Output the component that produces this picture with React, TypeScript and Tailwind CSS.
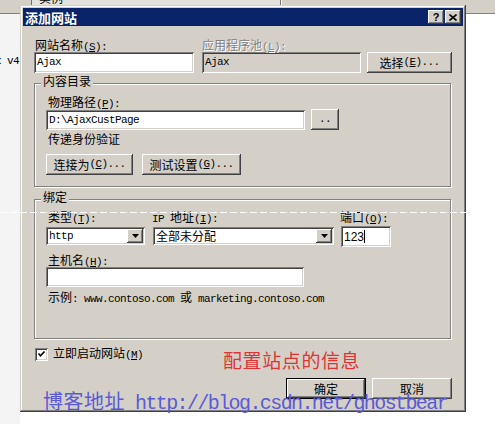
import React from "react";

const RAISED =
  "bg-[#d4d0c8] shadow-[inset_-1px_-1px_#404040,inset_1px_1px_#ffffff,inset_-2px_-2px_#808080,inset_2px_2px_#d4d0c8]";
const SUNKEN =
  "shadow-[inset_1px_1px_#808080,inset_-1px_-1px_#ffffff,inset_2px_2px_#404040,inset_-2px_-2px_#d4d0c8]";
const ETCHED = "border border-[#808080] shadow-[inset_1px_1px_#ffffff,1px_1px_#ffffff]";

function M({ children }: { children: React.ReactNode }) {
  return (
    <span className="font-['Liberation_Mono',monospace] text-[11px] tracking-[-0.6px]">{children}</span>
  );
}

function Lbl({ cn, k, dis, pre }: { cn: string; k?: string; dis?: boolean; pre?: string }) {
  return (
    <div
      className={
        dis
          ? "h-[14px] leading-[14px] text-[12px] whitespace-nowrap text-[#808080] [text-shadow:1px_1px_0_#ffffff]"
          : "h-[14px] leading-[14px] text-[12px] whitespace-nowrap text-black"
      }
    >
      {pre && <M>{pre} </M>}
      {cn}
      {k && (
        <M>
          (<span className="underline">{k}</span>):
        </M>
      )}
    </div>
  );
}

function Input({
  w,
  h,
  children,
  dis,
}: {
  w: string;
  h: string;
  children?: React.ReactNode;
  dis?: boolean;
}) {
  return (
    <div
      className={`${w} ${h} ${dis ? "bg-[#d4d0c8]" : "bg-white"} ${SUNKEN} flex items-center pl-[3px] overflow-hidden whitespace-nowrap`}
    >
      {children}
    </div>
  );
}

function Btn({ w, children, def }: { w: string; children: React.ReactNode; def?: boolean }) {
  return (
    <div
      className={`${w} h-[21px] ${RAISED} ${def ? "border border-black" : ""} flex items-center justify-center text-[12px] leading-none whitespace-nowrap`}
    >
      {children}
    </div>
  );
}

function Arrow() {
  return (
    <div className={`w-[16px] ${RAISED} flex items-center justify-center`}>
      <svg width="7" height="4" viewBox="0 0 7 4">
        <polygon points="0,0 7,0 3.5,4" fill="#000" />
      </svg>
    </div>
  );
}

function Select({ w, children }: { w: string; children: React.ReactNode }) {
  return (
    <div className={`${w} h-[18px] bg-white ${SUNKEN} flex p-[2px]`}>
      <div className="flex-1 flex items-center pl-[1px] overflow-hidden whitespace-nowrap">{children}</div>
      <Arrow />
    </div>
  );
}

function TBtn({ children }: { children: React.ReactNode }) {
  return <div className={`w-[16px] h-[14px] ${RAISED} flex items-center justify-center`}>{children}</div>;
}

export default function App() {
  return (
    <div className="relative w-[495px] h-[424px] overflow-hidden bg-white font-['Noto_Sans_CJK_SC',sans-serif]">
      {/* background window remnants */}
      <div className="flex h-[14px] border-b border-[#808080]">
        <div className="w-[32px] bg-[#d4d0c8] border-r border-[#707070]" />
        <div className="w-[249px] bg-[#e4e2dc] overflow-hidden border-r border-[#707070]">
          <div className="ml-[7px] -mt-[9px] text-[12px] leading-[14px] text-black">实例</div>
        </div>
        <div className="flex-1 bg-[#d4d0c8] border-l border-white" />
      </div>
      <div className="flex">
        <div className="w-[20px] h-[410px] bg-[#f4f4f4] overflow-hidden">
          <div className="mt-[40px] flex justify-end pr-[1px] whitespace-nowrap">
            <span className="font-['Liberation_Mono',monospace] text-[11px] tracking-[-0.6px] leading-[14px] text-black">
              Ajax v4
            </span>
          </div>
        </div>
      </div>

      {/* dialog window */}
      <div className="absolute left-[20px] top-[5px] w-[446px] h-[407px] bg-[#d4d0c8] p-[3px] shadow-[inset_-1px_-1px_#404040,inset_1px_1px_#d4d0c8,inset_-2px_-2px_#808080,inset_2px_2px_#ffffff]">
        <div className="h-[18px] bg-[#0a246a] flex items-center pl-[2px] pr-[2px]">
          <span className="text-white font-bold text-[13px] leading-none">添加网站</span>
          <div className="ml-auto flex gap-[1px]">
            <TBtn>
              <span className="font-['Liberation_Sans',sans-serif] font-bold text-[11px] leading-none text-black">?</span>
            </TBtn>
            <TBtn>
              <svg width="8" height="7" viewBox="0 0 8 7">
                <path d="M0.5 0.5 L7.5 6.5 M7.5 0.5 L0.5 6.5" stroke="#000" strokeWidth="1.6" />
              </svg>
            </TBtn>
          </div>
        </div>

        <div className="ml-[11px] w-[418px] text-[12px] text-black">
          {/* row 1 */}
          <div className="mt-[12px] flex items-end">
            <div className="w-[160px]">
              <div className="ml-[1px]">
                <Lbl cn="网站名称" k="S" />
              </div>
              <Input w="w-[160px]" h="h-[21px]">
                <M>Ajax</M>
              </Input>
            </div>
            <div className="ml-[8px] w-[159px]">
              <Lbl cn="应用程序池" k="L" dis />
              <Input w="w-[159px]" h="h-[21px]" dis>
                <M>Ajax</M>
              </Input>
            </div>
            <div className="ml-[6px]">
              <Btn w="w-[85px]">
                选择<M>(<span className="underline">E</span>)...</M>
              </Btn>
            </div>
          </div>

          {/* group 1 */}
          <div className={`relative mt-[10px] w-[417px] h-[104px] ${ETCHED} pl-[11px] pt-[11px]`}>
            <div className="absolute left-[6px] -top-[10px] px-[2px] bg-[#d4d0c8] leading-[14px] text-[12px]">内容目录</div>
            <div className="ml-[2px]">
              <Lbl cn="物理路径" k="P" />
            </div>
            <div className="flex items-end">
              <Input w="w-[259px]" h="h-[20px]">
                <M>D:\AjaxCustPage</M>
              </Input>
              <div className="ml-[6px]">
                <Btn w="w-[28px]">
                  <M>..</M>
                </Btn>
              </div>
            </div>
            <div className="mt-[2px] ml-[2px]">
              <Lbl cn="传递身份验证" />
            </div>
            <div className="mt-[8px] flex gap-[9px]">
              <Btn w="w-[87px]">
                连接为<M>(<span className="underline">C</span>)...</M>
              </Btn>
              <Btn w="w-[99px]">
                测试设置<M>(<span className="underline">G</span>)...</M>
              </Btn>
            </div>
          </div>

          {/* group 2 */}
          <div className={`relative mt-[12px] w-[417px] h-[140px] ${ETCHED} pl-[11px] pt-[10px]`}>
            <div className="absolute left-[6px] -top-[10px] px-[2px] bg-[#d4d0c8] leading-[14px] text-[12px]">绑定</div>
            <div className="flex">
              <div className="w-[99px]">
                <div className="ml-[2px]">
                  <Lbl cn="类型" k="T" />
                </div>
                <div className="mt-[3px]">
                  <Select w="w-[99px]">
                    <M>http</M>
                  </Select>
                </div>
              </div>
              <div className="ml-[7px] w-[182px]">
                <Lbl pre="IP" cn="地址" k="I" />
                <div className="mt-[3px] ml-[1px]">
                  <Select w="w-[181px]">
                    <span className="text-[12px] leading-none">全部未分配</span>
                  </Select>
                </div>
              </div>
              <div className="ml-[6px] w-[51px]">
                <Lbl cn="端口" k="O" />
                <div className="mt-[2px] ml-[1px]">
                  <Input w="w-[50px]" h="h-[21px]">
                    <span className="font-['Liberation_Sans',sans-serif] text-[12px] leading-none">123</span>
                    <span className="w-[1px] h-[13px] bg-black" />
                  </Input>
                </div>
              </div>
            </div>
            <div className="mt-[6px] ml-[2px]">
              <Lbl cn="主机名" k="H" />
            </div>
            <Input w="w-[258px]" h="h-[20px]" />
            <div className="mt-[3px] ml-[2px] h-[14px] leading-[14px] whitespace-nowrap">
              示例<M>: www.contoso.com </M>或<M> marketing.contoso.com</M>
            </div>
          </div>

          {/* checkbox + annotation */}
          <div className="mt-[7px] h-[32px] flex items-start">
            <div className="w-[189px] flex items-center">
              <div className={`ml-[1px] w-[13px] h-[13px] bg-white ${SUNKEN} flex items-center justify-center`}>
                <svg width="9" height="9" viewBox="0 0 9 9">
                  <polyline points="1.5,3.5 3.5,5.8 7.5,1.5" fill="none" stroke="#000" strokeWidth="1.7" />
                </svg>
              </div>
              <div className="ml-[5px] leading-[13px] whitespace-nowrap">
                立即启动网站<M>(<span className="underline">M</span>)</M>
              </div>
            </div>
            <div className="mt-[4px] text-[19px] tracking-[0.6px] leading-[20px] text-[#e03333] whitespace-nowrap">
              配置站点的信息
            </div>
          </div>

          {/* OK / Cancel */}
          <div className="flex justify-end gap-[6px]">
            <Btn w="w-[80px]" def>
              确定
            </Btn>
            <Btn w="w-[80px]">取消</Btn>
          </div>
        </div>
      </div>

      {/* dashed overlay line */}
      <svg className="absolute left-0 top-[212px]" width="466" height="1">
        <line x1="0" y1="0.5" x2="466" y2="0.5" stroke="#ffffff" strokeDasharray="7 3" />
      </svg>

      {/* watermark */}
      <div className="absolute left-[43px] top-[391px] flex items-baseline leading-none whitespace-nowrap text-[#5a5ad6]">
        <span className="text-[20px] tracking-[0.5px]">博客地址</span>
        <span className="ml-[10px] font-['Liberation_Mono',monospace] text-[20px] tracking-[-1.6px]">
          http://blog.csdn.net/ghostbear
        </span>
      </div>
    </div>
  );
}
